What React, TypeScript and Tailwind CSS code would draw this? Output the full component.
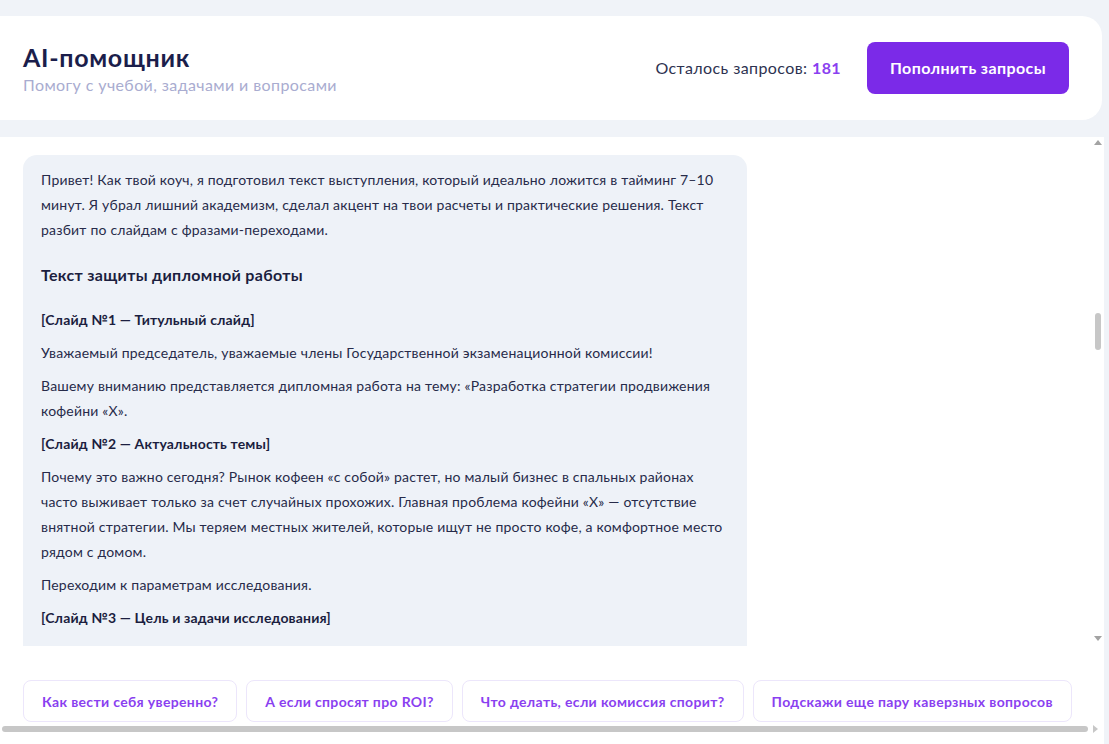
import React from "react";

const suggestions = [
  "Как вести себя уверенно?",
  "А если спросят про ROI?",
  "Что делать, если комиссия спорит?",
  "Подскажи еще пару каверзных вопросов",
];

function Para({ children }: { children: React.ReactNode }) {
  return <p className="mb-2 text-[14px] leading-[25px] tracking-[0.2px] text-[#272b4a]">{children}</p>;
}

function Slide({ children }: { children: React.ReactNode }) {
  return (
    <p className="mb-2 text-[14px] leading-[25px] font-bold tracking-[0.15px] text-[#1b1e3f]">{children}</p>
  );
}

export default function App() {
  return (
    <div
      className="flex h-[744px] w-full flex-col overflow-hidden bg-[#f0f3f8]"
      style={{ fontFamily: "Lato, 'Open Sans', sans-serif" }}
    >
      {/* header */}
      <header className="mt-4 mr-[7px] flex h-[104px] shrink-0 items-center justify-between rounded-r-[20px] bg-white pl-[23px] pr-[33px]">
        <div className="flex flex-col">
          <h1 className="text-[25px] leading-[30px] font-bold tracking-[0.7px] text-[#1b1e4b]">AI-помощник</h1>
          <p className="mt-[3px] text-[16px] leading-[20px] tracking-[0.4px] text-[#a9acd0]">
            Помогу с учебой, задачами и вопросами
          </p>
        </div>
        <div className="flex items-center gap-[26px]">
          <span className="text-[16px] tracking-[0.4px] text-[#2d3250]">
            Осталось запросов: <span className="font-bold text-[#8a3ff0]">181</span>
          </span>
          <button className="h-[52px] w-[202px] rounded-[8px] bg-[#7b2ae8] text-[16px] font-bold tracking-[0.4px] text-white">
            Пополнить запросы
          </button>
        </div>
      </header>

      {/* chat panel */}
      <section className="mt-[17px] mr-[5px] flex min-h-0 flex-1 flex-col bg-white">
        <div className="flex h-[509px] shrink-0">
          <div className="flex-1 overflow-hidden pt-[18px] pl-[23px]">
            <div className="w-[724px] rounded-t-[14px] bg-[#eef2f8] px-[18px] pt-[12px] pb-4">
              <Para>
                Привет! Как твой коуч, я подготовил текст выступления, который идеально ложится в тайминг 7–10
                <br />
                минут. Я убрал лишний академизм, сделал акцент на твои расчеты и практические решения. Текст
                <br />
                разбит по слайдам с фразами-переходами.
              </Para>
              <h3 className="mt-[20px] mb-[20px] text-[16px] leading-[25px] font-bold tracking-[0.3px] text-[#1b1e3f]">
                Текст защиты дипломной работы
              </h3>
              <Slide>[Слайд №1 — Титульный слайд]</Slide>
              <Para>Уважаемый председатель, уважаемые члены Государственной экзаменационной комиссии!</Para>
              <Para>
                Вашему вниманию представляется дипломная работа на тему: «Разработка стратегии продвижения
                <br />
                кофейни «Х».
              </Para>
              <Slide>[Слайд №2 — Актуальность темы]</Slide>
              <Para>
                Почему это важно сегодня? Рынок кофеен «с собой» растет, но малый бизнес в спальных районах
                <br />
                часто выживает только за счет случайных прохожих. Главная проблема кофейни «Х» — отсутствие
                <br />
                внятной стратегии. Мы теряем местных жителей, которые ищут не просто кофе, а комфортное место
                <br />
                рядом с домом.
              </Para>
              <Para>Переходим к параметрам исследования.</Para>
              <Slide>[Слайд №3 — Цель и задачи исследования]</Slide>
              <Para>
                Цель моей работы — разработать стратегию продвижения, которая увеличит поток постоянных гостей.
              </Para>
            </div>
          </div>
          {/* vertical scrollbar */}
          <div className="flex w-[10px] flex-col items-center pt-[3px] pr-[2px]">
            <div className="h-0 w-0 border-x-[4px] border-b-[5px] border-x-transparent border-b-[#a3a3a3]" />
            <div className="mt-[168px] h-[37px] w-[6px] rounded-full bg-[#c7c7c7]" />
            <div className="mt-auto mb-[5px] h-0 w-0 border-x-[4px] border-t-[5px] border-x-transparent border-t-[#a3a3a3]" />
          </div>
        </div>

        {/* suggestions */}
        <div className="flex flex-1 flex-col">
          <div className="flex gap-[9px] overflow-hidden pt-[34px] pl-[23px]">
            {suggestions.map((s) => (
              <button
                key={s}
                className="h-[42px] shrink-0 rounded-[8px] border border-[#ece6fb] bg-white px-[18px] text-[14px] font-bold tracking-[0.35px] text-[#8a3ff0]"
              >
                {s}
              </button>
            ))}
          </div>
          <div className="mt-[3px] flex items-center gap-[5px] pl-[2px] pr-[6px]">
            <div className="h-[6px] flex-1 rounded-full bg-[#c7c7c7]" />
            <div className="h-0 w-0 border-y-[4px] border-l-[5px] border-y-transparent border-l-[#c7c7c7]" />
          </div>
        </div>
      </section>
    </div>
  );
}
